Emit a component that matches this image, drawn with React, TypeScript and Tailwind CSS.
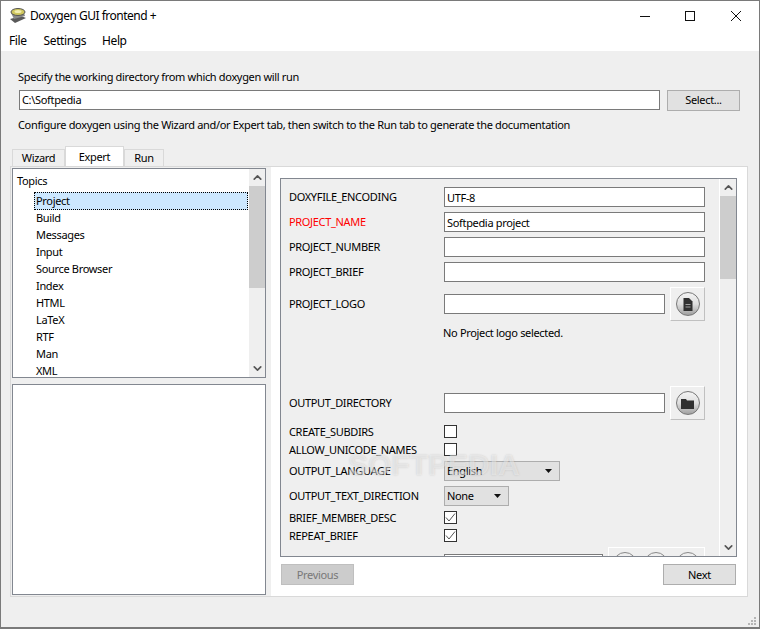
import { ChevronDown, ChevronUp } from 'lucide-react';

const topics = ['Build', 'Messages', 'Input', 'Source Browser', 'Index', 'HTML', 'LaTeX', 'RTF', 'Man', 'XML'];

function TextRow({ label, value, red }: { label: string; value?: string; red?: boolean }) {
  return (
    <div className="flex items-center h-5 mb-[5px]">
      <span className={`w-[155px] ${red ? 'text-[#ff0000]' : ''}`}>{label}</span>
      <div className="w-[261px] h-5 bg-white border border-[#7a7a7a] pl-[2px] leading-[19px]">{value}</div>
    </div>
  );
}

function RoundButton({ children }: { children: React.ReactNode }) {
  return (
    <div className="w-[35px] h-[34px] flex items-center justify-center border border-t-white border-l-white border-r-[#c0c0c0] border-b-[#c0c0c0]">
      <div className="w-6 h-6 rounded-full border border-[#777] bg-gradient-to-b from-[#f4f4f4] via-[#dedede] to-[#a0a0a0] flex items-center justify-center">
        {children}
      </div>
    </div>
  );
}

function FileRow({ label, icon }: { label: string; icon: React.ReactNode }) {
  return (
    <div className="flex items-center h-[34px]">
      <span className="w-[155px]">{label}</span>
      <div className="w-[221px] h-5 bg-white border border-[#7a7a7a]" />
      <div className="ml-[5px]">
        <RoundButton>{icon}</RoundButton>
      </div>
    </div>
  );
}

function CheckRow({ label, checked }: { label: string; checked?: boolean }) {
  return (
    <div className="flex items-center h-[13px] mb-[5px]">
      <span className="w-[155px] pt-[2px]">{label}</span>
      <div className="w-[13px] h-[13px] bg-white border border-[#333] flex items-center justify-center">
        {checked && (
          <svg width="11" height="11" viewBox="0 0 11 11" fill="none">
            <path d="M1 5.5 L4 9 L10 1.5" stroke="#555" strokeWidth="1" />
          </svg>
        )}
      </div>
    </div>
  );
}

function ComboRow({ label, value, width }: { label: string; value: string; width: string }) {
  return (
    <div className="flex items-center h-5 mb-[5px]">
      <span className="w-[155px]">{label}</span>
      <div className={`${width} h-5 bg-[#e1e1e1] border border-[#adadad] pl-[2px] flex items-center justify-between`}>
        <span>{value}</span>
        <svg width="7" height="4" viewBox="0 0 7 4" className="mr-[7px]">
          <path d="M0 0 H7 L3.5 4 Z" fill="#111" />
        </svg>
      </div>
    </div>
  );
}

export default function App() {
  return (
    <div className="relative w-[760px] h-[629px] flex flex-col bg-[#efefef] border border-[#7a7a7a] border-b-2 overflow-hidden text-[11px] tracking-[-0.33px] text-black font-['Noto_Sans','Open_Sans',sans-serif]">
      {/* Title bar */}
      <div className="h-[29px] shrink-0 bg-white flex items-center pl-[8px]">
        <svg width="18" height="17" viewBox="0 0 18 17" className="shrink-0">
          <path d="M1 12 L12 9 L17 11 L6 16 Z" fill="#5a5a5a" />
          <path d="M2 6 L14 3 L16 9 L5 12 Z" fill="#8a8a8a" />
          <ellipse cx="9" cy="5" rx="7" ry="3.5" fill="#cfc65e" stroke="#555" strokeWidth="1" />
          <ellipse cx="9" cy="4.5" rx="3.5" ry="1.5" fill="#f2eeb0" />
        </svg>
        <span className="ml-[3px] text-[12px] tracking-[-0.5px] pt-px">Doxygen GUI frontend +</span>
        <div className="ml-auto flex items-center">
          <svg width="12" height="12" viewBox="0 0 12 12" className="mr-[33px]">
            <path d="M1 6.5 H11" stroke="#111" strokeWidth="1" />
          </svg>
          <svg width="12" height="12" viewBox="0 0 12 12" className="mr-[34px]">
            <rect x="1.5" y="1.5" width="9" height="9" fill="none" stroke="#111" strokeWidth="1" />
          </svg>
          <svg width="12" height="12" viewBox="0 0 12 12" className="mr-[17px]">
            <path d="M1 1 L11 11 M11 1 L1 11" stroke="#111" strokeWidth="1" />
          </svg>
        </div>
      </div>
      {/* Menu */}
      <div className="h-[21px] shrink-0 bg-white flex items-center pl-[8px] gap-4 text-[12px] tracking-[-0.4px]">
        <span className="mr-px">File</span>
        <span>Settings</span>
        <span>Help</span>
      </div>

      <div className="flex-1 flex flex-col pl-[9px] pr-[11px]">
        <div className="pl-2 h-[39px] pt-[17px] leading-[18px]">Specify the working directory from which doxygen will run</div>
        <div className="flex pl-[9px] pr-[8px]">
          <div className="w-[641px] h-5 bg-white border border-[#7a7a7a] pl-[2px] leading-[18px]">C:\Softpedia</div>
          <div className="ml-[7px] w-[73px] h-[21px] bg-[#e1e1e1] border border-[#adadad] flex items-center justify-center">Select...</div>
        </div>
        <div className="pl-2 h-[35px] pt-[5px] leading-[18px]">Configure doxygen using the Wizard and/or Expert tab, then switch to the Run tab to generate the documentation</div>

        {/* Tabs */}
        <div className="flex items-end h-[21px] pl-[2px]">
          <div className="w-[53px] h-[18px] border border-b-0 border-[#d9d9d9] bg-[#efefef] flex items-center justify-center">Wizard</div>
          <div className="w-[59px] h-[21px] border border-b-0 border-[#d9d9d9] bg-white flex items-center justify-center">Expert</div>
          <div className="w-[40px] h-[18px] border border-b-0 border-[#d9d9d9] bg-[#efefef] flex items-center justify-center">Run</div>
        </div>

        {/* Pane */}
        <div className="w-[738px] h-[431px] border border-[#d9d9d9] bg-white flex -mt-px">
          {/* Left */}
          <div className="w-[260px] shrink-0 bg-[#efefef] pl-[1px] pt-[1px] flex flex-col">
            <div className="w-[254px] h-[210px] border border-[#828790] bg-white flex overflow-hidden">
              <div className="flex-1 flex flex-col leading-[17px] overflow-hidden">
                <div className="h-[23px] pl-1 pt-[3px] shrink-0">Topics</div>
                <div className="shrink-0 h-[18px] -mb-px ml-[21px] mr-px pl-[1px] bg-[#cde8ff] border border-dotted border-black leading-[16px]">Project</div>
                {topics.map((t) => (
                  <div key={t} className="shrink-0 h-[17px] pl-[23px]">{t}</div>
                ))}
              </div>
              <div className="w-[16px] shrink-0 bg-[#efefef] flex flex-col items-center justify-between">
                <div className="w-full flex flex-col items-center">
                  <ChevronUp size={13} strokeWidth={3} className="text-[#555] my-[2px]" />
                  <div className="w-full h-[102px] bg-[#cdcdcd]" />
                </div>
                <ChevronDown size={13} strokeWidth={3} className="text-[#555] my-[2px]" />
              </div>
            </div>
            <div className="w-[254px] h-[211px] mt-[6px] border border-[#828790] bg-white" />
          </div>

          {/* Right */}
          <div className="flex-1 pl-[9px] pt-[11px]">
            <div className="w-[457px] h-[379px] border border-[#828790] bg-[#efefef] flex">
              <div className="w-[438px] h-full overflow-hidden pl-[8px] pt-2 shrink-0">
                <TextRow label="DOXYFILE_ENCODING" value="UTF-8" />
                <TextRow label="PROJECT_NAME" value="Softpedia project" red />
                <TextRow label="PROJECT_NUMBER" />
                <TextRow label="PROJECT_BRIEF" />
                <FileRow
                  label="PROJECT_LOGO"
                  icon={
                    <svg width="10" height="13" viewBox="0 0 10 13">
                      <path d="M0.5 0 H6 L9.5 3.5 V13 H0.5 Z" fill="#2f2f2f" />
                      <path d="M2.5 6.5 H7.5 M2.5 9 H7.5" stroke="#bbb" strokeWidth="0.8" />
                    </svg>
                  }
                />
                <div className="h-[65px] pl-[154px] pt-[3px] leading-[18px]">No Project logo selected.</div>
                <FileRow
                  label="OUTPUT_DIRECTORY"
                  icon={
                    <svg width="13" height="11" viewBox="0 0 13 11">
                      <path d="M0 1 H5 L6 2.5 H13 V11 H0 Z" fill="#2f2f2f" />
                    </svg>
                  }
                />
                <div className="h-[5px]" />
                <CheckRow label="CREATE_SUBDIRS" />
                <CheckRow label="ALLOW_UNICODE_NAMES" />
                <ComboRow label="OUTPUT_LANGUAGE" value="English" width="w-[116px]" />
                <ComboRow label="OUTPUT_TEXT_DIRECTION" value="None" width="w-[65px]" />
                <CheckRow label="BRIEF_MEMBER_DESC" checked />
                <CheckRow label="REPEAT_BRIEF" checked />
                <div className="flex h-[34px] pl-[155px]">
                  <div className="w-[159px] h-5 mt-[7px] bg-white border border-[#7a7a7a]" />
                  <div className="ml-[5px] w-[97px] h-[34px] border border-white flex justify-around pt-[4px]">
                    <div className="w-6 h-6 rounded-full border border-[#888]" />
                    <div className="w-6 h-6 rounded-full border border-[#888]" />
                    <div className="w-6 h-6 rounded-full border border-[#888]" />
                  </div>
                </div>
              </div>
              <div className="flex-1 border-l border-white flex flex-col items-center justify-between">
                <div className="w-full flex flex-col items-center">
                  <ChevronUp size={13} strokeWidth={3} className="text-[#555] my-[2px]" />
                  <div className="w-full h-[83px] bg-[#cdcdcd]" />
                </div>
                <ChevronDown size={13} strokeWidth={3} className="text-[#555] my-[2px]" />
              </div>
            </div>
            <div className="flex justify-between w-[455px] ml-px mt-[7px]">
              <div className="w-[73px] h-[21px] pt-px bg-[#cccccc] border border-[#bfbfbf] text-[#787878] flex items-center justify-center">Previous</div>
              <div className="w-[73px] h-[21px] pt-px bg-[#e1e1e1] border border-[#adadad] flex items-center justify-center">Next</div>
            </div>
          </div>
        </div>
      </div>

      {/* Size grip */}
      <svg width="10" height="10" viewBox="0 0 10 10" className="absolute right-[2px] bottom-[1px]">
        <path d="M7 1h2v2H7zM4 4h2v2H4zM7 4h2v2H7zM1 7h2v2H1zM4 7h2v2H4zM7 7h2v2H7z" fill="#b5b5b5" />
      </svg>

      {/* Watermark */}
      <div className="absolute left-[347px] top-[447px] text-[30px] tracking-normal leading-[34px] font-bold text-white/45 [text-shadow:0_0_2px_rgba(120,120,120,0.3)] pointer-events-none font-['Liberation_Sans',sans-serif]">SOFTPEDIA</div>
    </div>
  );
}
